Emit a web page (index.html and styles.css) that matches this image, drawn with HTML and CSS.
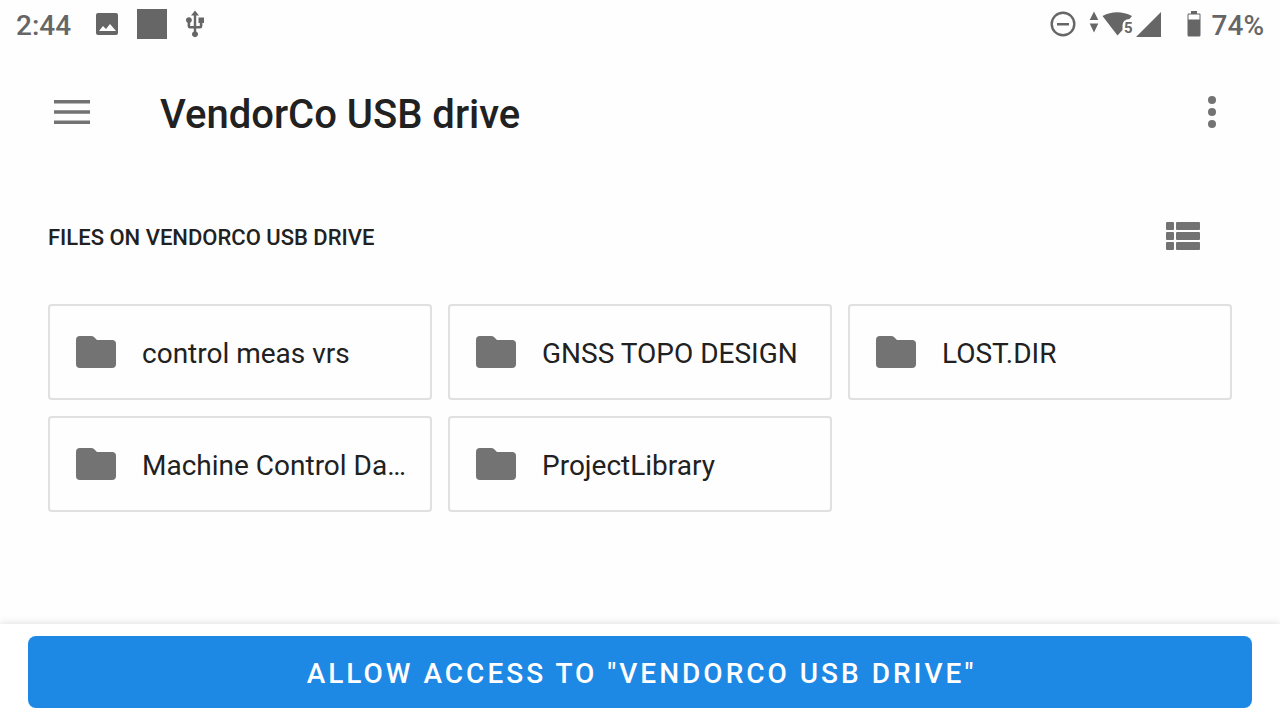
FILE: index.html
```html
<!DOCTYPE html>
<html lang="en">
<head>
    <meta charset="UTF-8">
    <meta name="viewport" content="width=device-width, initial-scale=1.0">
    <title>VendorCo USB drive</title>
    <link rel="stylesheet" href="styles.css">
</head>
<body>
    <div class="status-bar">
        <div class="status-left">
            <span class="clock">2:44</span>
            <svg width="24" height="24" viewBox="0 0 24 24" aria-hidden="true">
                <path fill-rule="evenodd" d="M3 1H21Q23 1 23 3V21Q23 23 21 23H3Q1 23 1 21V3Q1 1 3 1ZM4 19H21L15 12L11 17L8 14Z"/>
            </svg>
            <span class="square"></span>
            <svg width="18" height="28" viewBox="0 0 18 28" aria-hidden="true">
                <path d="M9 0.500L5 5.500H7.800V16H4.200V12.700A2.900 2.900 0 1 0 1.600 12.700V16Q1.600 18.500 4 18.500H7.800V21.500A3 3 0 1 0 10.200 21.500V18.500H14Q16.400 18.500 16.400 16V13H18V7.500H12.500V13H13.800V16H10.200V5.500H13Z"/>
            </svg>
        </div>
        <div class="status-right">
            <svg class="dnd" width="26" height="26" viewBox="0 0 26 26" aria-hidden="true">
                <path fill-rule="evenodd" d="M13 0.500A12.500 12.500 0 1 0 13 25.500A12.500 12.500 0 1 0 13 0.500ZM13 2.900A10.100 10.100 0 1 1 13 23.100A10.100 10.100 0 1 1 13 2.900ZM7 12H19V14.500H7Z"/>
            </svg>
            <svg width="72" height="28" viewBox="0 0 72 28" aria-hidden="true">
                <path d="M5 1.500L9.300 10H0.700ZM5 22.500L9.300 13.500H0.700Z"/>
                <path d="M13.500 6Q28 -1.500 43 6L40.500 9Q34 9.500 33.500 15V20L28.500 25.500Z"/>
                <path d="M72 2V27H47Z"/>
                <text x="35" y="23" class="wifi-band">5</text>
            </svg>
            <svg class="battery" width="14" height="26" viewBox="0 0 14 26" aria-hidden="true">
                <path fill-rule="evenodd" d="M4 0H10V2.500H12.500Q13.500 2.500 13.500 3.500V24Q13.500 25.500 12 25.500H2Q0.500 25.500 0.500 24V3.500Q0.500 2.500 1.500 2.500H4ZM1.500 3.500V8.500H12.500V3.500Z"/>
            </svg>
            <span class="battery-text">74%</span>
        </div>
    </div>

    <header class="app-bar">
        <button class="icon-btn" aria-label="Show roots">
            <svg width="36" height="24" viewBox="0 0 36 24">
                <path d="M0 0H36V3.500H0ZM0 10.200H36V13.800H0ZM0 20.500H36V24H0Z"/>
            </svg>
        </button>
        <h1>VendorCo USB drive</h1>
        <button class="icon-btn" aria-label="More options">
            <svg width="8" height="32" viewBox="0 0 8 32">
                <circle cx="4" cy="4" r="4"/>
                <circle cx="4" cy="16" r="4"/>
                <circle cx="4" cy="28" r="4"/>
            </svg>
        </button>
    </header>

    <main>
        <div class="section-header">
            <h2>FILES ON VENDORCO USB DRIVE</h2>
            <button class="icon-btn" aria-label="List view">
                <svg width="34" height="28" viewBox="0 0 34 28">
                    <rect x="0" y="0" width="8" height="8" rx="1"/>
                    <rect x="10" y="0" width="24" height="8" rx="1"/>
                    <rect x="0" y="10" width="8" height="8" rx="1"/>
                    <rect x="10" y="10" width="24" height="8" rx="1"/>
                    <rect x="0" y="20" width="8" height="8" rx="1"/>
                    <rect x="10" y="20" width="24" height="8" rx="1"/>
                </svg>
            </button>
        </div>

        <svg class="defs" width="0" height="0" aria-hidden="true">
            <symbol id="folder" viewBox="0 0 40 32">
                <path d="M4 0H15Q17 0 18 1L21 4H36Q40 4 40 8V28Q40 32 36 32H4Q0 32 0 28V4Q0 0 4 0Z"/>
            </symbol>
        </svg>

        <div class="folder-grid">
            <button class="folder"><svg width="40" height="32"><use href="#folder"/></svg><span>control meas vrs</span></button>
            <button class="folder"><svg width="40" height="32"><use href="#folder"/></svg><span>GNSS TOPO DESIGN</span></button>
            <button class="folder"><svg width="40" height="32"><use href="#folder"/></svg><span>LOST.DIR</span></button>
            <button class="folder"><svg width="40" height="32"><use href="#folder"/></svg><span>Machine Control Da…</span></button>
            <button class="folder"><svg width="40" height="32"><use href="#folder"/></svg><span>ProjectLibrary</span></button>
        </div>
    </main>

    <footer class="bottom-bar">
        <button class="allow-btn">ALLOW ACCESS TO "VENDORCO USB DRIVE"</button>
    </footer>
</body>
</html>
```
FILE: styles.css
```css
* {
    box-sizing: border-box;
}
body {
    font-family: Roboto, "Liberation Sans", sans-serif;
    margin: 0;
    background-color: #fefefe;
    color: #212121;
    display: flex;
    flex-direction: column;
    min-height: 100vh;
}
button {
    font-family: inherit;
    border: none;
    padding: 0;
    background: none;
    cursor: pointer;
}
svg {
    display: block;
    flex-shrink: 0;
    fill: #737373;
}
.defs {
    position: absolute;
}

/* Status bar */
.status-bar {
    display: flex;
    justify-content: space-between;
    height: 48px;
    padding: 0 16px;
    font-size: 28px;
    font-weight: 500;
    line-height: 32px;
    color: #666;
}
.status-bar svg {
    fill: #666;
}
.status-left, .status-right {
    display: flex;
    align-items: center;
}
.status-left {
    gap: 18px;
}
.clock, .battery-text {
    padding-top: 4px;
}
.clock {
    margin-right: 6px;
}
.square {
    width: 30px;
    height: 30px;
    margin-right: 1px;
    background-color: #666;
}
.dnd {
    margin-right: 13px;
}
.battery {
    margin: 0 11px 0 26px;
}
.wifi-band {
    font-size: 15px;
    font-weight: 700;
}

/* App bar */
.app-bar {
    display: flex;
    align-items: center;
    height: 128px;
    padding: 0 32px;
}
.icon-btn {
    display: flex;
    align-items: center;
    justify-content: center;
    width: 80px;
    height: 80px;
}
h1 {
    flex: 1;
    margin: 0 0 0 48px;
    padding-top: 6px;
    font-size: 40px;
    font-weight: 500;
    line-height: 48px;
}
.app-bar .icon-btn:last-child {
    margin-right: -4px;
}

/* File list */
main {
    flex: 1;
    padding: 0 48px;
}
.section-header {
    display: flex;
    align-items: center;
    justify-content: space-between;
    height: 120px;
    padding-right: 9px;
    margin-bottom: 8px;
}
h2 {
    margin: 0;
    padding-top: 2px;
    font-size: 22px;
    font-weight: 500;
}
.folder-grid {
    display: grid;
    grid-template-columns: repeat(auto-fill, minmax(340px, 1fr));
    gap: 16px;
}
.folder {
    display: flex;
    align-items: center;
    gap: 26px;
    min-width: 0;
    height: 96px;
    padding: 0 22px 0 26px;
    border: 2px solid #e0e0e0;
    border-radius: 4px;
    font-size: 28px;
    color: #212121;
}
.folder span {
    padding-top: 2px;
    overflow: hidden;
    white-space: nowrap;
    text-overflow: ellipsis;
}

/* Bottom action */
.bottom-bar {
    padding: 12px 28px;
    background-color: #fff;
    box-shadow: 0 0 8px rgba(0, 0, 0, 0.15);
}
.allow-btn {
    display: block;
    width: 100%;
    height: 72px;
    padding: 2px 0 0 3px;
    border-radius: 8px;
    background-color: #1e88e5;
    color: #fff;
    font-size: 28px;
    font-weight: 500;
    letter-spacing: 3px;
}
```
